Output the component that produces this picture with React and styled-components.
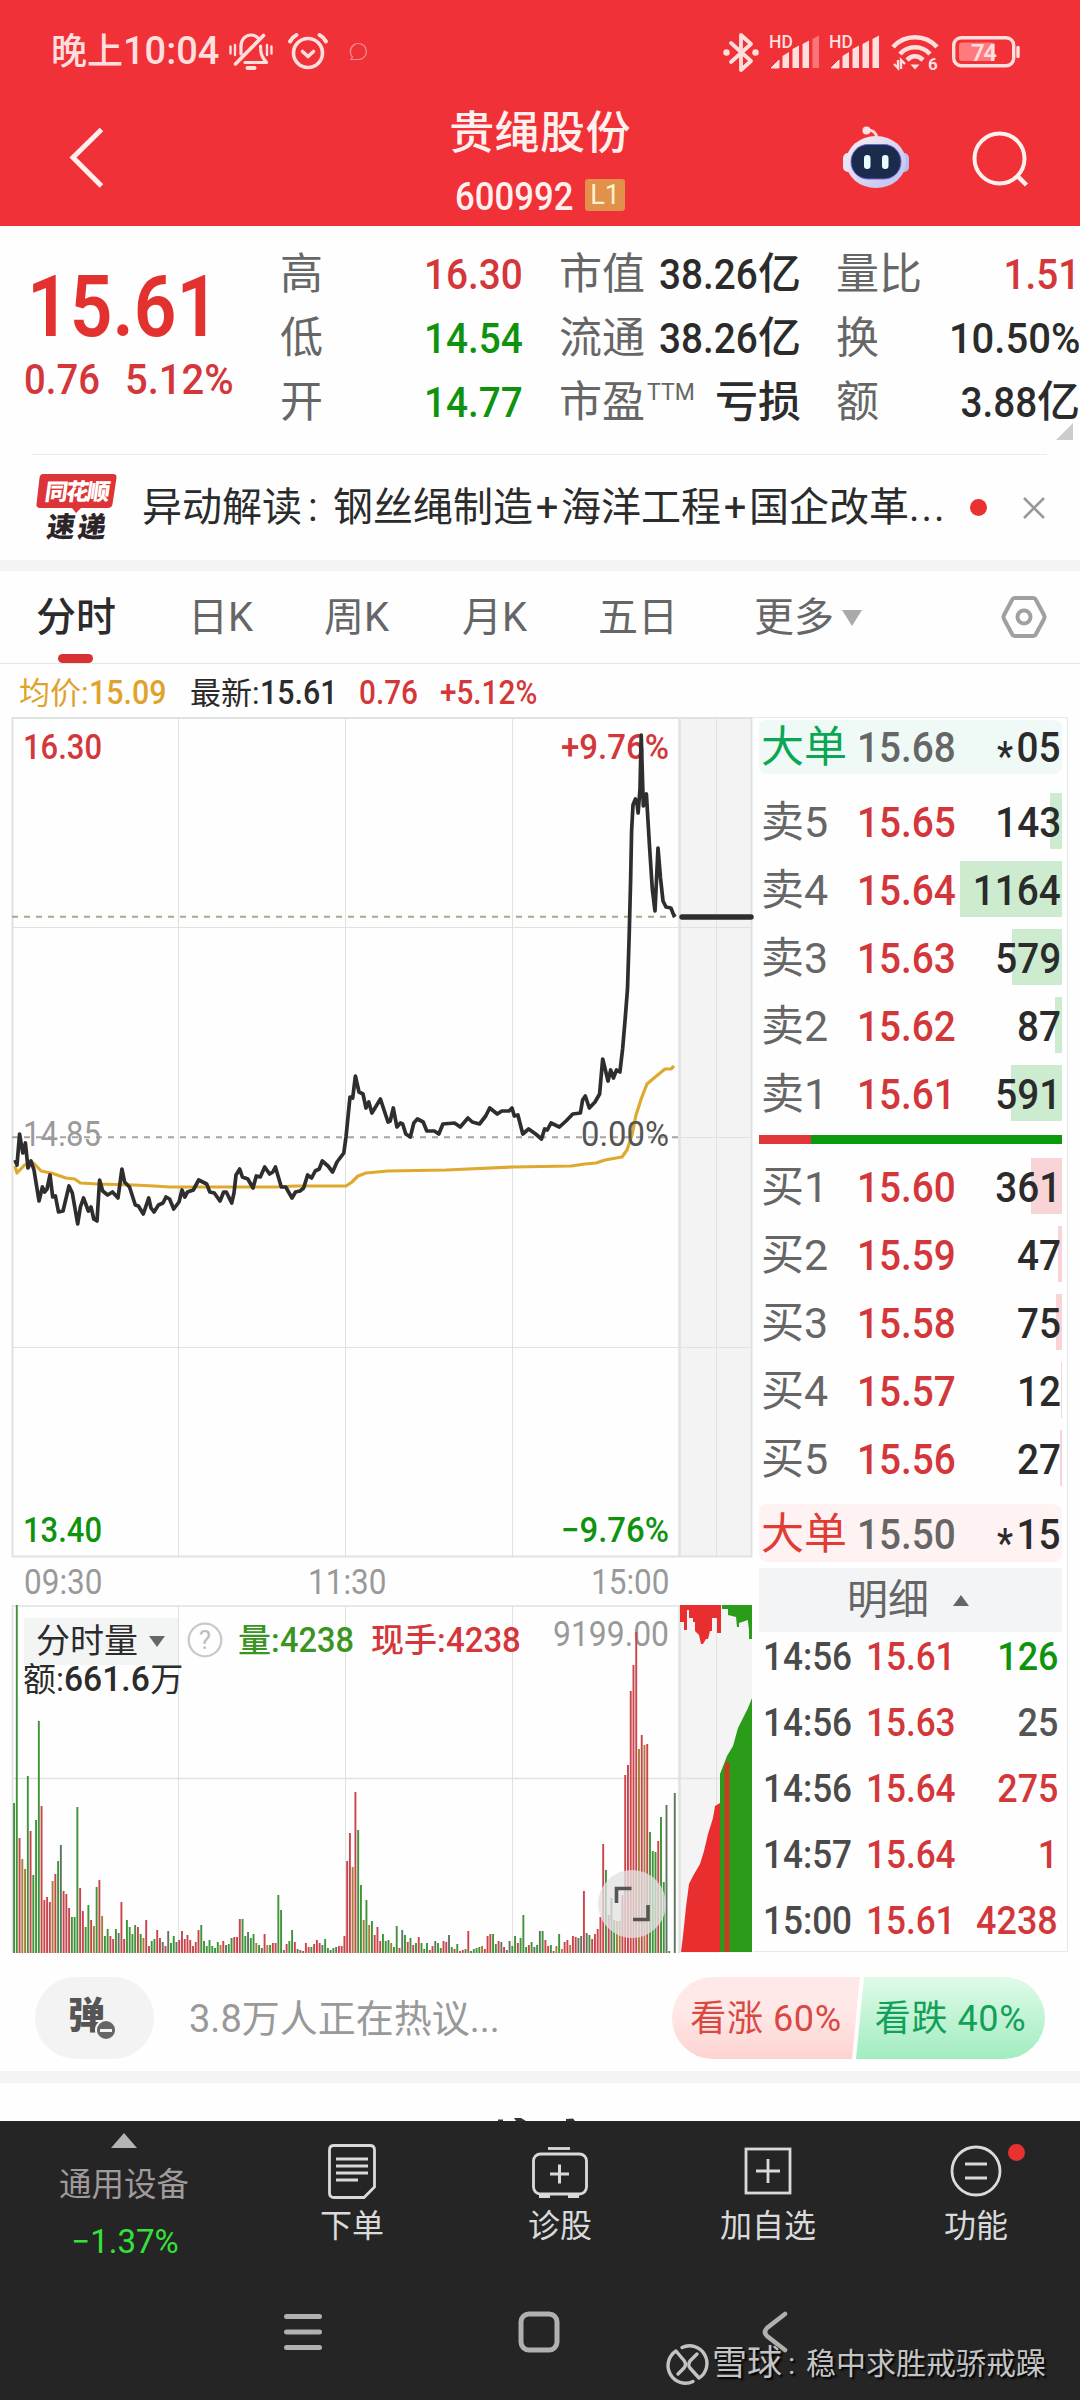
import React from "react";
import styled, { createGlobalStyle } from "styled-components";

const RED = "#d3373a";
const GREEN = "#0f930f";
const DARK = "#2b2b2b";
const GREY = "#666666";
const LIGHT = "#999999";

const GlobalStyle = createGlobalStyle`
  * { box-sizing: border-box; }
  body {
    margin: 0;
    background: #ffffff;
    font-family: Roboto, "Noto Sans CJK SC", sans-serif;
    color: ${DARK};
  }
  svg { display: block; flex: none; overflow: visible; }
`;

const Screen = styled.div`
  width: 1080px;
  height: 2400px;
  overflow: hidden;
  display: flex;
  flex-direction: column;
  background: #fefefe;
`;

// condensed digits
const Num = styled.span`
  display: inline-block;
  font-weight: ${p => p.$weight || 500};
  font-size: ${p => p.$size || 43}px;
  color: ${p => p.$color || "inherit"};
  transform: scaleX(${p => p.$scale || 0.9});
  transform-origin: ${p => p.$from || "left"} center;
  margin-right: ${p => p.$trim || 0}px;
  white-space: nowrap;
`;

/* ---------- header ---------- */

const Header = styled.header`
  height: 226px;
  background: #f03138;
  color: #fff0ee;
`;

const StatusBar = styled.div`
  height: 103px;
  padding: 0 58px 0 51px;
  display: flex;
  align-items: center;
  color: #ffdfdd;
`;

const Clock = styled.div`
  width: 178px;
  font-size: 36px;
  line-height: 40px;
  font-weight: 500;
  white-space: nowrap;
`;

const ClockDigits = styled.span`
  font-size: 38px;
`;

const StatusRight = styled.div`
  margin-left: auto;
  display: flex;
  align-items: center;
`;

const TitleBar = styled.div`
  height: 123px;
  display: grid;
  grid-template-columns: 300px 1fr 300px;
`;

const BackButton = styled.div`
  padding: 22px 0 0 66px;
`;

const Title = styled.div`
  padding-top: 3px;
  text-align: center;
  font-size: 45px;
  line-height: 56px;
  font-weight: 500;
  letter-spacing: 0.4px;
`;

const CodeLine = styled.div`
  display: flex;
  align-items: center;
  justify-content: center;
  gap: 11px;
  height: 64px;
  padding-top: 2px;
`;

const Code = styled.div`
  width: 119px;
  line-height: 44px;
  height: 40px;
`;

const Badge = styled.span`
  width: 40px;
  height: 32px;
  border-radius: 3px;
  background: #e2914a;
  color: #fff3cf;
  font-size: 27px;
  line-height: 33px;
  text-align: center;
`;

const HeaderTools = styled.div`
  display: flex;
  padding: 22px 0 0 62px;
  gap: 62px;
`;

/* ---------- quote ---------- */

const Quote = styled.section`
  height: 228px;
  padding-top: 16px;
  display: grid;
  grid-template-columns: 280px 243px 239px 242px;
  column-gap: 0;
  position: relative;
`;

const PriceBlock = styled.div`
  padding-left: 24px;
`;

const BigPrice = styled.div`
  height: 106px;
  line-height: 130px;
  padding-left: 3px;
`;

const Change = styled.div`
  display: flex;
  line-height: 62px;
  & > div:first-child { width: 101px; }
`;

const StatColumn = styled.div`
  margin-left: ${p => p.$left || 0}px;
`;

const Stat = styled.div`
  height: 64px;
  display: flex;
  justify-content: space-between;
  align-items: center;
  white-space: nowrap;
`;

const StatLabel = styled.span`
  font-size: 43px;
  line-height: 66px;
  color: ${GREY};
  sup {
    font-size: 23px;
    line-height: 0;
    position: relative;
    top: -2px;
    margin-left: 2px;
  }
`;

const StatValue = styled.span`
  font-size: 43px;
  font-weight: 500;
  line-height: 66px;
  color: ${p => p.$color || DARK};
`;

const Corner = styled.i`
  position: absolute;
  right: 7px;
  bottom: 14px;
  border-left: 17px solid transparent;
  border-bottom: 17px solid #cccccc;
`;

const News = styled.div`
  height: 106px;
  margin: 0 33px 0 32px;
  border-top: 1px solid #ebebeb;
  display: flex;
  align-items: center;
`;

const NewsText = styled.div`
  width: 801px;
  margin-left: 24px;
  font-size: 40px;
  line-height: 60px;
  white-space: nowrap;
  span { display: inline-block; }
`;

const Colon = styled.span`
  width: 31px;
  padding-left: 6px;
`;

const Plus = styled.span`
  width: 28px;
  text-align: center;
`;

const Dot = styled.i`
  width: 17px;
  height: 17px;
  border-radius: 50%;
  background: #e8322f;
`;

const Band = styled.div`
  height: ${p => p.$h}px;
  background: #f4f4f4;
`;

/* ---------- tabs ---------- */

const Tabs = styled.nav`
  height: 93px;
  padding-left: 36px;
  display: flex;
  border-bottom: 1px solid #e4e6e6;
`;

const Tab = styled.div`
  width: ${p => p.$w}px;
  font-size: 40px;
  line-height: 98px;
  color: ${p => (p.$active ? DARK : GREY)};
  font-weight: ${p => (p.$active ? 500 : 400)};
  display: flex;
  align-items: center;
  padding-top: ${p => (p.$icon ? 0 : 2)}px;
  position: relative;
  &::after {
    content: "";
    display: ${p => (p.$active ? "block" : "none")};
    position: absolute;
    left: 22px;
    bottom: 0;
    width: 35px;
    height: 9px;
    border-radius: 5px;
    background: #d93133;
  }
`;

const Caret = styled.i`
  border: ${p => p.$w / 2}px solid transparent;
  border-bottom-width: ${p => (p.$up ? p.$h : 0)}px;
  border-top-width: ${p => (p.$up ? 0 : p.$h)}px;
  border-${p => (p.$up ? "bottom" : "top")}-color: ${p => p.$color};
`;

const InfoLine = styled.div`
  height: 53px;
  padding-left: 19px;
  display: flex;
  font-size: 31px;
  line-height: 57px;
  & > div { white-space: nowrap; }
`;

const InfoItem = styled.div`
  width: ${p => p.$w}px;
  color: ${p => p.$color};
`;

/* ---------- charts ---------- */

const Main = styled.main`
  height: 1235px;
  display: flex;
  padding-left: 11px;
`;

const Charts = styled.div`
  width: 742px;
  position: relative;
`;

const AxisRow = styled.div`
  height: 48px;
  display: flex;
  color: ${LIGHT};
  line-height: 52px;
  padding-left: 13px;
`;

const AxisTime = styled.div`
  width: ${p => p.$w}px;
`;

const VolumeBox = styled.div`
  position: relative;
`;

const VolumeHead = styled.div`
  position: absolute;
  left: 13px;
  top: 11px;
  display: flex;
  align-items: center;
  white-space: nowrap;
`;

const VolumePicker = styled.div`
  width: 154px;
  height: 47px;
  padding-left: 12px;
  background: #f3f4f4;
  font-size: 34px;
  line-height: 51px;
  display: flex;
  align-items: center;
  gap: 11px;
`;

const VolumeLabel = styled.div`
  margin-left: ${p => p.$left}px;
  width: ${p => p.$w}px;
  font-size: 33px;
  font-weight: 500;
  line-height: 50px;
  color: ${p => p.$color};
`;

const Amount = styled.div`
  position: absolute;
  left: 12px;
  top: 54px;
  font-size: 33px;
  line-height: 42px;
  white-space: nowrap;
`;

const ExpandButton = styled.div`
  position: absolute;
  left: 587px;
  top: 265px;
  width: 68px;
  height: 68px;
  border-radius: 50%;
  background: rgba(226, 226, 226, 0.78);
  display: flex;
  align-items: center;
  justify-content: center;
`;

/* ---------- order book ---------- */

const Book = styled.aside`
  width: 315px;
  padding: 2px 5px 0 6px;
  border: 1px solid #e6eaea;
  border-left: 0;
  border-bottom-width: 1px;
`;

const BigOrder = styled.div`
  height: ${p => p.$h}px;
  margin-top: ${p => p.$top || 0}px;
  border-radius: 8px;
  background: ${p => p.$bg};
  display: grid;
  grid-template-columns: 96px 100px 1fr;
  padding-left: 2px;
  line-height: ${p => p.$line}px;
`;

const OrderRow = styled.div`
  height: 68px;
  display: grid;
  grid-template-columns: 96px 100px 1fr;
  padding-left: 2px;
  line-height: 68px;
  position: relative;
`;

const OrderName = styled.span`
  font-size: 43px;
  color: ${p => p.$color || GREY};
  white-space: nowrap;
`;

const OrderQty = styled.div`
  text-align: right;
  position: relative;
  padding-right: 1px;
`;

const Star = styled.span`
  font-size: 40px;
  position: relative;
  top: 8px;
  margin-right: 4px;
`;

const DepthBar = styled.i`
  position: absolute;
  right: 0;
  top: 5px;
  height: 56px;
  background: ${p => p.$color};
`;

const OrderList = styled.div`
  margin-top: ${p => p.$top}px;
`;

const Balance = styled.div`
  height: 9px;
  margin-top: 7px;
  background: linear-gradient(to right, #e03838 52px, #0a9a0a 52px);
`;

const DetailHead = styled.div`
  height: 64px;
  margin-top: 6px;
  background: #f3f4f5;
  color: ${GREY};
  font-size: 41px;
  line-height: 68px;
  display: flex;
  align-items: center;
  padding-left: 88px;
  gap: 24px;
`;

const Trades = styled.div`
  display: flex;
  flex-direction: column;
  gap: 16px;
`;

const Trade = styled.div`
  height: 50px;
  line-height: 51px;
  padding: 0 4px 0 4px;
  display: grid;
  grid-template-columns: 103px 91px 1fr;
  & > div:last-child { text-align: right; }
`;

/* ---------- discussion ---------- */

const Discuss = styled.div`
  height: 119px;
  padding: 25px 35px 12px;
  display: flex;
  align-items: flex-start;
`;

const BulletButton = styled.div`
  width: 119px;
  height: 82px;
  border-radius: 41px;
  background: #f3f3f3;
  color: #555555;
  font-size: 37px;
  font-weight: 900;
  line-height: 79px;
  padding-left: 33px;
  position: relative;
`;

const Minus = styled.i`
  position: absolute;
  left: 60px;
  top: 42px;
  width: 22px;
  height: 22px;
  border: 2px solid #f3f3f3;
  border-radius: 50%;
  background: linear-gradient(#f3f3f3, #f3f3f3) center / 12px 3px no-repeat #666666;
`;

const DiscussHint = styled.div`
  margin-left: 35px;
  width: 483px;
  font-size: 38px;
  line-height: 84px;
  color: ${LIGHT};
`;

const Vote = styled.div`
  height: 82px;
  font-size: 36px;
  letter-spacing: 0.6px;
  line-height: 85px;
  text-align: center;
  white-space: nowrap;
`;

const VoteUp = styled(Vote)`
  width: 188px;
  border-radius: 41px 0 0 41px;
  color: #d94841;
  background: linear-gradient(#ffe9e8 40%, #fcd3d0);
  clip-path: polygon(0 0, 100% 0, calc(100% - 8px) 100%, 0 100%);
`;

const VoteDown = styled(Vote)`
  width: 189px;
  margin-left: -4px;
  border-radius: 0 41px 41px 0;
  color: #12a05a;
  background: linear-gradient(#dffbe8, #a2ecc0);
  clip-path: polygon(8px 0, 100% 0, 100% 100%, 0 100%);
`;

const Peek = styled.div`
  height: 38px;
  display: flex;
  align-items: flex-end;
  padding-left: 496px;
`;

/* ---------- bottom ---------- */

const BottomBar = styled.footer`
  height: 279px;
  background: #252525;
  color: #dadada;
  position: relative;
`;

const Actions = styled.div`
  height: 160px;
  display: grid;
  grid-template-columns: 248px repeat(4, 208px);
`;

const Sector = styled.div`
  display: flex;
  flex-direction: column;
  align-items: center;
  padding-top: 12px;
`;

const SectorName = styled.div`
  margin-top: 12px;
  font-size: 32.5px;
  line-height: 50px;
  color: #a09a9b;
`;

const SectorChange = styled.div`
  margin-top: 7px;
  font-size: 33px;
  line-height: 50px;
  color: #35e23b;
  padding-left: 2px;
`;

const Action = styled.div`
  display: flex;
  flex-direction: column;
  align-items: center;
  padding-top: 20px;
  font-size: 32px;
  line-height: 55px;
  position: relative;
`;

const ActionDot = styled(Dot)`
  position: absolute;
  left: 136px;
  top: 23px;
`;

const SystemKeys = styled.div`
  display: flex;
  align-items: center;
  padding: 30px 0 0 284px;
  color: #b0b0b0;
`;

const Watermark = styled.div`
  position: absolute;
  left: 668px;
  top: 222px;
  display: flex;
  align-items: center;
  color: #c3c3c3;
  line-height: 42px;
  white-space: nowrap;
  text-shadow: 2px 2px 2px #000000;
`;

const Brand = styled.span`
  font-size: 35px;
  margin-left: 5px;
  width: 76px;
`;

const Author = styled.span`
  font-size: 30px;
  span {
    display: inline-block;
    width: 18px;
  }
`;

/* ---------- icons ---------- */

const BellOffIcon = () => (
  <svg width="44" height="38" viewBox="0 0 44 38" fill="none" stroke="currentColor" strokeWidth="3.2" strokeLinecap="round">
    <path d="M12 21v-8c0-6 4-11 10-11 3 0 5 1 7 3" />
    <path d="M34.5 2.500L6.500 31" strokeWidth="3.6" />
    <path d="M31.500 13c0 8 1 10 6 16.500H16" strokeLinejoin="round" />
    <path d="M18.500 35h7" strokeWidth="4" />
    <path d="M1.500 13.500v7M6 12v10M38 12v10M42.500 13.500v7" strokeWidth="2.4" />
  </svg>
);

const AlarmIcon = () => (
  <svg width="40" height="38" viewBox="0 0 40 38" fill="none" stroke="currentColor" strokeWidth="3.6" strokeLinecap="round">
    <circle cx="20" cy="20" r="14.500" />
    <path d="M14.500 18.500l5.500 5 5.500-5" strokeLinejoin="round" />
    <path d="M2 8.500c1.500-3 3.500-5 6.500-6.500M38 8.500c-1.500-3-3.500-5-6.500-6.500" strokeWidth="4" />
  </svg>
);

const BubbleIcon = () => (
  <svg width="20" height="19" viewBox="0 0 20 19" fill="none" stroke="#ef8d90" strokeWidth="1.200">
    <path d="M2 17.500l1.500-2.500A8 8 0 1 1 10 17.500z" />
  </svg>
);

const BluetoothIcon = () => (
  <svg width="38" height="40" viewBox="0 0 38 40" fill="none" stroke="currentColor" strokeWidth="3.800" strokeLinecap="round" strokeLinejoin="round">
    <path d="M9 11l20 18-10 9V3l10 9L9 30" />
    <circle cx="4.500" cy="20.500" r="3.200" fill="currentColor" stroke="none" />
    <circle cx="33.500" cy="20.500" r="3.200" fill="currentColor" stroke="none" />
  </svg>
);

const SignalIcon = ({ full }) => (
  <svg width="52" height="36" viewBox="0 0 52 36" fill="currentColor">
    <text x="0" y="14" fontSize="17.500" fontWeight="500" fontFamily="Roboto">HD</text>
    <path d="M2 34l8-8v8z" strokeWidth="1" stroke="currentColor" strokeLinejoin="round" />
    <path d="M13.500 34V22l6.500-4v16zM23.500 34V15l6.500-3.500V34zM33.500 34V10l6.500-3.500V34z" />
    <path d="M43.500 34V5l6.500-3.500V34z" opacity={full ? 1 : 0.4} />
  </svg>
);

const WifiIcon = () => (
  <svg width="48" height="38" viewBox="0 0 48 38" fill="none" stroke="currentColor" strokeWidth="4.600">
    <path d="M2 14c12-13 32-13 44 0" />
    <path d="M9 21c8-9 22-9 30 0" />
    <path d="M16 27c5-5 11-5 16 0" />
    <path d="M19.500 31.500h9L24 36.500z" fill="currentColor" stroke="none" />
    <path d="M3 31l4 4V27M10 36v-9l4 4" strokeWidth="2.400" />
    <text x="37" y="37" fontSize="17" fontWeight="700" fontFamily="Roboto" fill="currentColor" stroke="none">6</text>
  </svg>
);

const BatteryIcon = () => (
  <svg width="70" height="32" viewBox="0 0 70 32">
    <rect x="1.700" y="1.700" width="60" height="28" rx="7.500" fill="none" stroke="currentColor" strokeWidth="3.400" />
    <rect x="7" y="6.500" width="36" height="18.500" rx="3" fill="#ff7a7c" />
    <path d="M66 11.500v9" stroke="currentColor" strokeWidth="3.400" strokeLinecap="round" />
    <text x="19" y="24.500" fontSize="24" fontWeight="600" fontFamily="Roboto" fill="currentColor" textLength="26">74</text>
  </svg>
);

const RobotIcon = () => (
  <svg width="68" height="64" viewBox="0 0 68 64">
    <defs>
      <linearGradient id="shell" x1="0" y1="0" x2="1" y2="1">
        <stop offset="0" stopColor="#fdeff3" />
        <stop offset="1" stopColor="#b9bff0" />
      </linearGradient>
    </defs>
    <path d="M25 5c6 0 9 2 10 8" fill="none" stroke="#ffd6dc" strokeWidth="3" />
    <circle cx="24.500" cy="5.500" r="4" fill="#ffe1e4" />
    <rect x="1" y="28" width="10" height="19" rx="5" fill="#e9e4f6" />
    <rect x="57" y="28" width="10" height="19" rx="5" fill="#b8bdf0" />
    <ellipse cx="34" cy="37" rx="30" ry="26" fill="url(#shell)" />
    <rect x="9" y="19.500" width="50" height="34.500" rx="17" fill="#1b2b4c" stroke="#6f63d8" strokeWidth="1" />
    <rect x="22" y="30" width="6.500" height="14" rx="3.200" fill="#e8fbff" />
    <rect x="40" y="30" width="6.500" height="14" rx="3.200" fill="#e8fbff" />
  </svg>
);

const SearchIcon = () => (
  <svg width="60" height="62" viewBox="0 0 60 62" fill="none" stroke="currentColor" strokeWidth="4">
    <circle cx="27.500" cy="33.500" r="25" />
    <path d="M45.500 51l9 9" strokeWidth="4.500" />
  </svg>
);

const BrandLogo = () => (
  <svg width="86" height="72" viewBox="0 0 86 72">
    <path d="M11 2h70q4 0 3.500 4l-4 26q-.6 4-4.500 4H49l-5 5-4-5H8q-4 0-3.500-4l3-26q.5-4 3.500-4z" fill="#dd3437" />
    <g fontFamily="'Noto Sans CJK SC'" fontWeight="900">
      <text transform="skewX(-8)" x="16" y="28.500" fontSize="23" fill="#fff" textLength="65">同花顺</text>
      <text transform="skewX(-8)" x="23" y="65" fontSize="28" fill="#2b2529" textLength="59">速递</text>
    </g>
  </svg>
);

const HexIcon = () => (
  <svg width="46" height="44" viewBox="0 0 46 44" fill="none" stroke="#a0a0a0" strokeWidth="4" strokeLinejoin="round">
    <path d="M13.500 3h19q1.500 0 2.500 2l8 15q1 2 0 4l-8 15q-1 2-2.500 2h-19q-1.500 0-2.500-2l-8-15q-1-2 0-4l8-15q1-2 2.500-2z" />
    <circle cx="23" cy="22" r="6.500" />
  </svg>
);

const HelpIcon = () => (
  <svg width="36" height="36" viewBox="0 0 36 36">
    <circle cx="18" cy="17" r="16.300" fill="none" stroke="#c9c9c9" strokeWidth="2.300" />
    <text x="18" y="26" fontSize="26" fontFamily="Roboto" fill="#bdbdbd" textAnchor="middle">?</text>
  </svg>
);

const OrderIcon = () => (
  <svg width="50" height="58" viewBox="0 0 50 58" fill="none" stroke="currentColor" strokeWidth="2.800">
    <path d="M7 4.500h36q4.500 0 4.500 4.500v37L37 56.500H7q-4.500 0-4.500-4.500V9Q2.500 4.500 7 4.500z" />
    <path d="M9 18h32M9 25h32M9 32h32M9 39h22" />
  </svg>
);

const DiagnoseIcon = () => (
  <svg width="58" height="58" viewBox="0 0 58 58" fill="none" stroke="currentColor" strokeWidth="2.800">
    <path d="M17 7.500h22" />
    <rect x="2.500" y="13" width="53" height="40" rx="7" />
    <path d="M19 33h19M28.500 23.500v19M8 55.500h11M37 55.500h11" strokeWidth="3" />
  </svg>
);

const AddIcon = () => (
  <svg width="48" height="58" viewBox="0 0 48 58" fill="none" stroke="currentColor" strokeWidth="2.800">
    <rect x="2" y="8" width="44" height="44" />
    <path d="M12 30h24M24 18v24" />
  </svg>
);

const MenuIcon = () => (
  <svg width="52" height="58" viewBox="0 0 52 58" fill="none" stroke="currentColor" strokeWidth="2.800">
    <circle cx="26" cy="30" r="24" />
    <path d="M15 23h22M15 37h22" />
  </svg>
);

const XueqiuIcon = () => (
  <svg width="39" height="39" viewBox="0 0 39 39" fill="none" stroke="currentColor" strokeWidth="3.400" strokeLinecap="round" strokeLinejoin="round">
    <path d="M14 2.500a17.500 17.500 0 0 1 17 30.500L22 23q-2.500-3.500 0-7l7-7" />
    <path d="M25 36.500A17.500 17.500 0 0 1 8 6l8 9.500q3 4 0 7.500l-6 6" />
  </svg>
);

/* ---------- chart data ---------- */

const PRICE = "15,1160 17,1165 19.6,1134 22.8,1153 25.4,1143 28,1168 31,1161 34,1170 39,1201 42.4,1187 44.6,1192 47,1189 50,1175 52.7,1197 55.4,1196 58.5,1212 63,1211 69,1186 72.3,1193 77.7,1224 80.4,1207 83.5,1198 88.4,1211 91,1207 93.8,1219 97,1221 99.6,1180 102.7,1191 107.6,1195 112.5,1192 118,1198 121.9,1169 124.6,1182 129.5,1187 135.3,1205 138.4,1206 143.3,1214 148.7,1198 151,1208 154,1212 158.5,1205 163,1203 166,1197 169.6,1199 173.7,1209 179,1202 182,1190 184.8,1197 187.5,1192 193.3,1190 198.7,1180 206.7,1184 209.8,1192 214.3,1193 220,1201 223.7,1192 226.3,1192 231.7,1203 234,1193 236,1175 239.7,1169 242.4,1177 247.8,1179 253,1188 256.3,1176 260.3,1177 264.7,1167 269.6,1174 272.8,1172 275.4,1167 281.3,1187 285.7,1187 292,1198 295.5,1192 300,1191 303.6,1188 307.6,1175 311.6,1178 315.2,1171 319.2,1169 322.3,1161 328,1166 332.6,1172 337,1162 343.8,1153 346,1137 348.2,1115 350,1097 352.7,1098 355.4,1076 359,1092 363,1094 366,1108 368.8,1102 371.9,1113 375,1108 380.4,1099 388,1122 390.2,1121 393.3,1108 396.9,1127 400.4,1123 402.7,1124 405.8,1134 410.3,1137 413.8,1123 417.4,1119 423.2,1122 426.8,1131 434.4,1131 438.8,1134 442.9,1124 454.5,1123 460.3,1127 467.9,1118 472.3,1122 479.5,1124 485.7,1116 489.7,1108 497.3,1114 501.8,1111 509,1111 512,1108 514.3,1116 517.9,1115 522.8,1134 528.6,1129 535.7,1134 541.5,1139 544.6,1129 547.3,1130 551,1123 559.4,1127 566,1121 572.8,1114 580.4,1113 582.6,1100 585.3,1096 589.3,1108 595,1102 599.6,1094 602.7,1059 605.4,1070 608,1081 610.7,1070 613.4,1078 616.5,1070 619.9,1072 622.6,1049 625,1021 627.5,989 629.2,935 630.6,881 631.6,831 633,805 635.4,799 637,803 638.1,813 640,789 641.2,735 643.3,806 646.4,794 649.5,846 652.3,889 655,911 658,848 660.5,878 663,901 666,907 670.9,908 673.3,914 675,917";

const AVERAGE = "15,1166 17,1173 24.6,1165 33.5,1163 41,1171 51.3,1173 66,1178 74.6,1179 80.4,1183 98,1184 134,1185 154,1186 170,1187 277,1187 295,1186 346,1186 352,1182 358,1176 366,1173 388,1171 446,1170 513,1167 571,1166 585,1164 596,1163 605,1160 622,1157 627,1150 632,1135 636,1115 641.5,1098 647,1084 654,1078 665,1069 671,1069 674,1066";

// one bar a minute: colour key + height
const VOLUME = (
  "g150 g348 r115 o94 o84 g177 r122 g78 g133 g232 r147 r53 r56 r51 o72 r79 g92 k108 r62 r59 r45 g36 g36 g146 r65 r42 g26 g48 r33 o27 g66 r73 o37 g17 g24 r17 r14 g24 k20 r51 " +
  "r14 g33 g26 g19 g28 r26 g19 o15 r33 r7 g12 g14 r23 r15 k11 r7 k22 g10 g17 k11 r13 r22 r14 r18 r13 r7 r11 r23 g28 g12 g7 g13 g7 g5 g11 o8 r12 k8 g9 g15 " +
  "r16 r16 r34 g34 g17 k21 g15 g19 o10 g8 k5 r19 o8 g8 r10 r10 g58 g43 k3 r9 g12 g23 r11 k4 r3 k2 r10 r6 g6 r9 r13 r10 k8 g14 g5 k3 g5 k6 r7 r7 " +
  "r17 r92 r120 o86 r161 g123 g68 o33 g53 o28 g32 r18 r26 r12 g19 g12 g13 o10 g6 g27 r5 k23 g18 r11 g15 r8 g10 r16 g10 g4 g10 r3 r7 k12 g10 g5 r12 r11 k18 g6 " +
  "r4 g9 r2 r3 g4 r22 g2 g4 g5 g6 o7 r4 r17 r19 g19 g9 r12 k11 r6 k3 k12 g7 g17 r10 g15 g38 g6 r8 g11 k6 g8 k22 g22 r13 r7 g8 r2 o7 g19 o4 " +
  "r11 r13 o8 r17 r16 k15 k17 r62 k20 g18 r14 r19 r24 r36 r109 g83 r38 k55 g33 o32 o32 r58 r178 r188 r262 r288 r321 o204 r218 o208 r209 g121 g102 g101 r112 g136 g71 k148 g2 g0 k160"
).split(" ");

const BAR_COLORS = { r: "#cb444c", g: "#3f9338", o: "#a47f3c", k: "#5f7560" };

const GRID = "#dde3e1";

const PriceChart = () => (
  <svg width="742" height="840" viewBox="11 717 742 840">
    <rect x="680" y="718" width="72" height="839" fill="#f3f3f3" />
    <g stroke={GRID} strokeWidth="1">
      <path d="M178.500 718v839M345.500 718v839M512.500 718v839M716.500 718v839M12 927.500h740M12 1347.500h740M680 1137.500h72" />
      <path d="M12 718h740M12.500 717v840M12 1556.500h740M751.500 717v840" strokeWidth="2" />
      <path d="M679.500 717v840" strokeWidth="2.500" />
    </g>
    <path d="M12 916.800h662" stroke="#a9a884" strokeWidth="2" strokeDasharray="6 6" />
    <path d="M12 1137.300h667" stroke="#a4a4a4" strokeWidth="2" strokeDasharray="6 6" />
    <g fontFamily="Roboto" fontSize="35" fontWeight="500">
      <text x="23" y="759" fill={RED} textLength="79" lengthAdjust="spacingAndGlyphs">16.30</text>
      <text x="561" y="759" fill={RED} textLength="108" lengthAdjust="spacingAndGlyphs">+9.76%</text>
      <text x="23" y="1146" fill="#9a9a9a" fontWeight="400" textLength="78" lengthAdjust="spacingAndGlyphs">14.85</text>
      <text x="23" y="1542" fill={GREEN} textLength="79" lengthAdjust="spacingAndGlyphs">13.40</text>
      <text x="561" y="1542" fill={GREEN} textLength="108" lengthAdjust="spacingAndGlyphs">−9.76%</text>
    </g>
    <polyline points={AVERAGE} fill="none" stroke="#dfa92f" strokeWidth="3.200" strokeLinejoin="round" />
    <polyline points={PRICE} fill="none" stroke="#2f2d2d" strokeWidth="3.700" strokeLinejoin="round" />
    <text x="581" y="1146" fill="#555" fontFamily="Roboto" fontSize="35" textLength="88" lengthAdjust="spacingAndGlyphs">0.00%</text>
    <path d="M682 917h69" stroke="#2f2d2d" strokeWidth="5.500" strokeLinecap="round" />
  </svg>
);

const VolumeChart = () => (
  <svg width="742" height="348" viewBox="11 1604 742 348">
    <rect x="680" y="1604" width="72" height="348" fill="#f3f4f3" />
    <g stroke={GRID} strokeWidth="1">
      <path d="M178.500 1605v347M345.500 1605v347M512.500 1605v347M716.500 1605v347" />
      <path d="M12 1605h740M12.500 1604v348M12 1777.500h740" strokeWidth="1.600" />
      <path d="M679.500 1604v348" strokeWidth="2.500" />
    </g>
    <text x="553" y="1645" fontFamily="Roboto" fontSize="35" fill={LIGHT} textLength="116" lengthAdjust="spacingAndGlyphs">9199.00</text>
    {VOLUME.map((item, i) => {
      const height = Number(item.slice(1));
      return (
        <rect key={i} x={13.100 + i * 2.753} y={1952 - height} width="1.900" height={height} fill={BAR_COLORS[item[0]]} />
      );
    })}
    <g fill="#e82e2e">
      <path d="M680 1604v17h4v8h3v-20h2v8h4v4h2v9l4 4 2 9h2l3-5h2l2-8h2v-13h5v15h4v-28z" />
      <path d="M681 1951l2-16 3-29 3-23 4-8 7-12 4-13 4-17 5-16 2-12 5-3v149z" />
    </g>
    <g fill="#2a9c1a">
      <path d="M722 1604v4h6v6l8 2 1 10h2v-4l9-3v2l1 8v9h3v-34z" />
      <path d="M720 1951v-178l7-18 6-10 5-18 7-14 3-6 4-10v254z" />
    </g>
    <path d="M724.500 1951v-186l2-4h3v190z" fill="#c93a22" />
  </svg>
);

/* ---------- sections ---------- */

const SELL = [
  ["卖5", "15.65", "143", 12],
  ["卖4", "15.64", "1164", 102],
  ["卖3", "15.63", "579", 50],
  ["卖2", "15.62", "87", 7],
  ["卖1", "15.61", "591", 51]
];

const BUY = [
  ["买1", "15.60", "361", 31],
  ["买2", "15.59", "47", 4],
  ["买3", "15.58", "75", 6],
  ["买4", "15.57", "12", 1],
  ["买5", "15.56", "27", 2]
];

const TRADES = [
  ["14:56", "15.61", "126", GREEN],
  ["14:56", "15.63", "25", "#555555"],
  ["14:56", "15.64", "275", RED],
  ["14:57", "15.64", "1", RED],
  ["15:00", "15.61", "4238", RED]
];

const Orders = ({ rows, color, top }) => (
  <OrderList $top={top}>
    {rows.map(([name, price, qty, depth]) => (
      <OrderRow key={name}>
        <OrderName>{name}</OrderName>
        <div><Num $color={RED}>{price}</Num></div>
        <OrderQty>
          <DepthBar $color={color} style={{ width: depth }} />
          <Num $from="right" $color={DARK}>{qty}</Num>
        </OrderQty>
      </OrderRow>
    ))}
  </OrderList>
);

const TopHeader = () => (
  <Header>
    <StatusBar>
      <Clock>晚上<ClockDigits>10:04</ClockDigits></Clock>
      <BellOffIcon />
      <div style={{ width: 15 }} />
      <AlarmIcon />
      <div style={{ width: 21 }} />
      <BubbleIcon />
      <StatusRight>
        <BluetoothIcon />
        <div style={{ width: 9 }} />
        <SignalIcon />
        <div style={{ width: 8 }} />
        <SignalIcon full />
        <div style={{ width: 10 }} />
        <WifiIcon />
        <div style={{ width: 13 }} />
        <BatteryIcon />
      </StatusRight>
    </StatusBar>
    <TitleBar>
      <BackButton>
        <svg width="40" height="66" viewBox="0 0 40 66" fill="none" stroke="currentColor" strokeWidth="5">
          <path d="M35.500 4.500L7 32.500l28.500 28.500" />
        </svg>
      </BackButton>
      <div>
        <Title>贵绳股份</Title>
        <CodeLine>
          <Code><Num $size={39} $scale={0.89}>600992</Num></Code>
          <Badge>L1</Badge>
        </CodeLine>
      </div>
      <HeaderTools>
        <RobotIcon />
        <SearchIcon />
      </HeaderTools>
    </TitleBar>
  </Header>
);

const QuotePanel = () => (
  <Quote>
    <PriceBlock>
      <BigPrice><Num $size={86} $scale={0.87} $weight={600} $color="#e2312f">15.61</Num></BigPrice>
      <Change>
        <div><Num $color={RED} $scale={0.89}>0.76</Num></div>
        <div><Num $color={RED} $scale={0.93}>5.12%</Num></div>
      </Change>
    </PriceBlock>
    <StatColumn>
      <Stat><StatLabel>高</StatLabel><Num $from="right" $color={RED}>16.30</Num></Stat>
      <Stat><StatLabel>低</StatLabel><Num $from="right" $color={GREEN}>14.54</Num></Stat>
      <Stat><StatLabel>开</StatLabel><Num $from="right" $color={GREEN}>14.77</Num></Stat>
    </StatColumn>
    <StatColumn $left={36} style={{ width: 242 }}>
      <Stat><StatLabel>市值</StatLabel><StatValue><Num $from="right">38.26</Num>亿</StatValue></Stat>
      <Stat><StatLabel>流通</StatLabel><StatValue><Num $from="right">38.26</Num>亿</StatValue></Stat>
      <Stat><StatLabel>市盈<sup>TTM</sup></StatLabel><StatValue>亏损</StatValue></Stat>
    </StatColumn>
    <StatColumn $left={74} style={{ width: 244 }}>
      <Stat><StatLabel>量比</StatLabel><Num $from="right" $color={RED}>1.51</Num></Stat>
      <Stat><StatLabel>换</StatLabel><Num $from="right" $scale={0.93}>10.50%</Num></Stat>
      <Stat><StatLabel>额</StatLabel><StatValue><Num $from="right">3.88</Num>亿</StatValue></Stat>
    </StatColumn>
    <Corner />
  </Quote>
);

const ChartPanel = () => (
  <Charts>
    <PriceChart />
    <AxisRow>
      <AxisTime $w={284}><Num $size={35} $weight={400}>09:30</Num></AxisTime>
      <AxisTime $w={283}><Num $size={35} $weight={400}>11:30</Num></AxisTime>
      <AxisTime $w={100}><Num $size={35} $weight={400}>15:00</Num></AxisTime>
    </AxisRow>
    <VolumeBox>
      <VolumeChart />
      <VolumeHead>
        <VolumePicker>分时量<Caret $w={16} $h={11} $color="#666666" /></VolumePicker>
        <div style={{ width: 9 }} />
        <HelpIcon />
        <VolumeLabel $left={15} $w={132} $color="#3a9422">量:<Num $size={35} $scale={0.93}>4238</Num></VolumeLabel>
        <VolumeLabel $left={1} $w={160} $color={RED}>现手:<Num $size={35} $scale={0.94}>4238</Num></VolumeLabel>
      </VolumeHead>
      <Amount>额:<Num $size={35} $scale={0.96} $trim={-3}>661.6</Num>万</Amount>
      <ExpandButton>
        <svg width="38" height="38" viewBox="0 0 38 38" fill="none" stroke="#555" strokeWidth="3.600">
          <path d="M3.500 18V3.500h15M35 20v14.500H20" />
        </svg>
      </ExpandButton>
    </VolumeBox>
  </Charts>
);

const BookPanel = () => (
  <Book>
    <BigOrder $h={54} $line={55} $bg="#effaf6">
      <OrderName $color="#0aa653">大单</OrderName>
      <div><Num $color={GREY}>15.68</Num></div>
      <OrderQty><Num $from="right" $color={DARK}><Star>*</Star>05</Num></OrderQty>
    </BigOrder>
    <Orders rows={SELL} color="#cdebcf" top={14} />
    <Balance />
    <Orders rows={BUY} color="#f8d4d7" top={9} />
    <BigOrder $h={58} $top={11} $line={60} $bg="#fef3f2">
      <OrderName $color="#e23b35">大单</OrderName>
      <div><Num $color={GREY}>15.50</Num></div>
      <OrderQty><Num $from="right" $color={DARK}><Star>*</Star>15</Num></OrderQty>
    </BigOrder>
    <DetailHead>明细<Caret $up $w={16} $h={11} $color="#666666" /></DetailHead>
    <Trades>
      {TRADES.map(([time, price, qty, color], i) => (
        <Trade key={i}>
          <div><Num $size={39} $color="#4a4a4a">{time}</Num></div>
          <div><Num $size={39} $color={RED}>{price}</Num></div>
          <div><Num $size={39} $scale={0.92} $from="right" $color={color}>{qty}</Num></div>
        </Trade>
      ))}
    </Trades>
  </Book>
);

const Bottom = () => (
  <BottomBar>
    <Actions>
      <Sector>
        <Caret $up $w={26} $h={15} $color="#b5b5b5" />
        <SectorName>通用设备</SectorName>
        <SectorChange>−1.37%</SectorChange>
      </Sector>
      <Action><OrderIcon />下单</Action>
      <Action><DiagnoseIcon />诊股</Action>
      <Action><AddIcon />加自选</Action>
      <Action><MenuIcon />功能<ActionDot /></Action>
    </Actions>
    <SystemKeys>
      <svg width="38" height="40" viewBox="0 0 38 40" stroke="currentColor" strokeWidth="5" strokeLinecap="round">
        <path d="M2.500 4.500h33M2.500 20h33M2.500 35.500h33" />
      </svg>
      <div style={{ width: 196 }} />
      <svg width="42" height="42" viewBox="0 0 42 42" fill="none" stroke="currentColor" strokeWidth="5">
        <rect x="3" y="3" width="36" height="36" rx="8" />
      </svg>
      <div style={{ width: 201 }} />
      <svg width="28" height="42" viewBox="0 0 28 42" fill="none" stroke="currentColor" strokeWidth="4.500" strokeLinecap="round">
        <path d="M24 3L6 17q-4 4 0 8l18 14" />
      </svg>
    </SystemKeys>
    <Watermark>
      <XueqiuIcon />
      <Brand>雪球</Brand>
      <Author><span>:</span>稳中求胜戒骄戒躁</Author>
    </Watermark>
  </BottomBar>
);

const App = () => (
  <>
    <GlobalStyle />
    <Screen>
      <TopHeader />
      <QuotePanel />
      <News>
        <BrandLogo />
        <NewsText>
          异动解读<Colon>:</Colon>钢丝绳制造<Plus>+</Plus>海洋工程<Plus>+</Plus>国企改革<span style={{ letterSpacing: 2 }}>...</span>
        </NewsText>
        <div style={{ width: 27 }} />
        <Dot />
        <div style={{ width: 35 }} />
        <svg width="24" height="24" viewBox="0 0 24 24" stroke="#999" strokeWidth="2.600">
          <path d="M2 2l20 20M22 2L2 22" />
        </svg>
      </News>
      <Band $h={11} />
      <Tabs>
        <Tab $active $w={152}>分时</Tab>
        <Tab $w={136}>日K</Tab>
        <Tab $w={138}>周K</Tab>
        <Tab $w={136}>月K</Tab>
        <Tab $w={156}>五日</Tab>
        <Tab $w={247}>更多<Caret $w={20} $h={16} $color="#aaaaaa" style={{ marginLeft: 8 }} /></Tab>
        <Tab $icon $w={60}><HexIcon /></Tab>
      </Tabs>
      <InfoLine>
        <InfoItem $w={171} $color="#dfa32b">均价:<Num $size={33} $scale={0.92}>15.09</Num></InfoItem>
        <InfoItem $w={169} $color={DARK}>最新:<Num $size={33} $scale={0.92}>15.61</Num></InfoItem>
        <InfoItem $w={81} $color={RED}><Num $size={33}>0.76</Num></InfoItem>
        <InfoItem $w={110} $color={RED}><Num $size={33}>+5.12%</Num></InfoItem>
      </InfoLine>
      <Main>
        <ChartPanel />
        <BookPanel />
      </Main>
      <Discuss>
        <BulletButton>弹<Minus /></BulletButton>
        <DiscussHint>3.8万人正在热议...</DiscussHint>
        <VoteUp>看涨 60%</VoteUp>
        <VoteDown>看跌 40%</VoteDown>
      </Discuss>
      <Band $h={12} />
      <Peek>
        <svg width="84" height="3" viewBox="0 0 84 3" fill="#333">
          <path d="M2 1.500h5v1.500H2zM18 0h7l5 3H20zM70 1l7-.5 2 2.500h-9z" />
        </svg>
      </Peek>
      <Bottom />
    </Screen>
  </>
);

export default App;
